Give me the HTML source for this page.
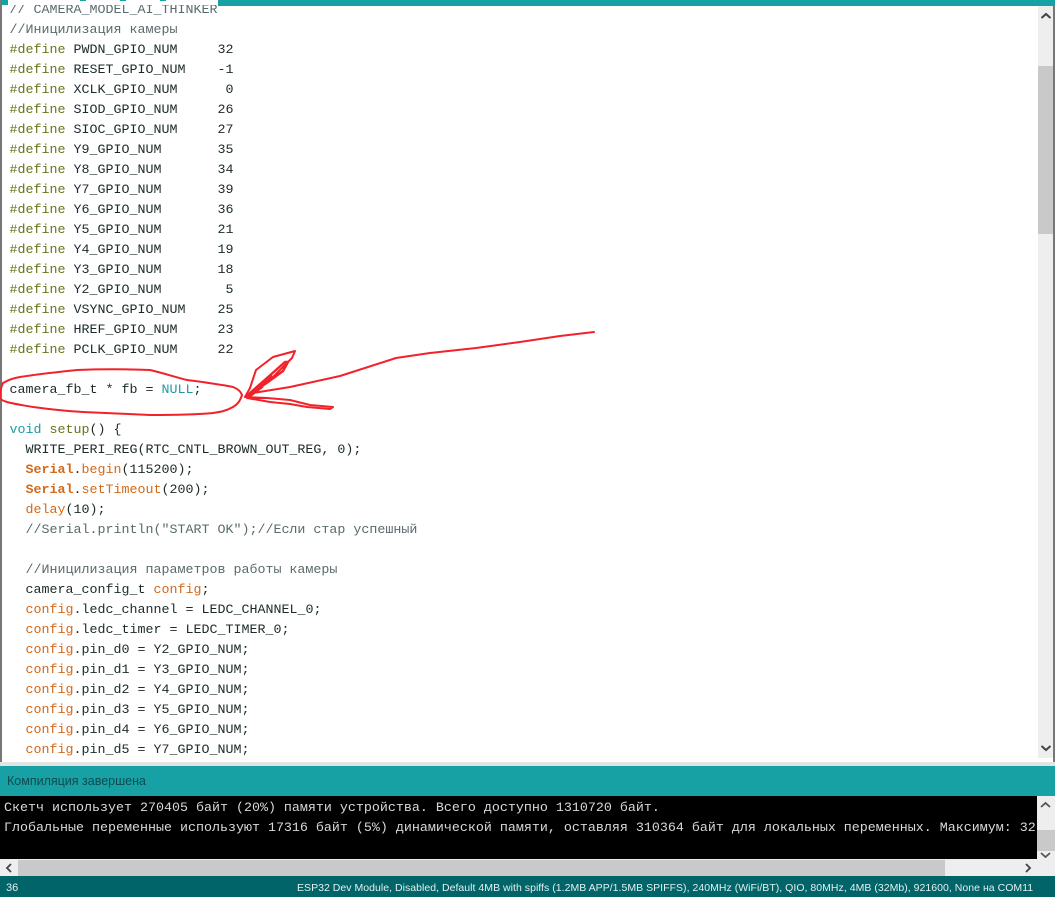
<!DOCTYPE html>
<html><head><meta charset="utf-8"><style>
html,body{margin:0;padding:0}
body{width:1055px;height:897px;position:relative;overflow:hidden;background:#fff;font-family:"Liberation Mono","DejaVu Sans Mono",monospace}
.a{position:absolute}
.c{position:absolute;left:9.5px;top:1px;white-space:pre;font-size:13.33px;line-height:20px;color:#1c2a2a;filter:blur(.25px)}
.l{display:block;height:20px}
.k{color:#d3691a}.t{color:#1f9aa0}.m{color:#5a6a6c}.y{color:#65761c}
.s{font-family:"Liberation Sans",sans-serif}
</style></head><body>
<div class="a" style="left:0;top:6px;width:1055px;height:756px;background:#fff"></div>
<div class="c"><span class="l m">// CAMERA_MODEL_AI_THINKER</span><span class="l m">//Иницилизация камеры</span><span class="l"><span class="y">#define</span> PWDN_GPIO_NUM     32</span><span class="l"><span class="y">#define</span> RESET_GPIO_NUM    -1</span><span class="l"><span class="y">#define</span> XCLK_GPIO_NUM      0</span><span class="l"><span class="y">#define</span> SIOD_GPIO_NUM     26</span><span class="l"><span class="y">#define</span> SIOC_GPIO_NUM     27</span><span class="l"><span class="y">#define</span> Y9_GPIO_NUM       35</span><span class="l"><span class="y">#define</span> Y8_GPIO_NUM       34</span><span class="l"><span class="y">#define</span> Y7_GPIO_NUM       39</span><span class="l"><span class="y">#define</span> Y6_GPIO_NUM       36</span><span class="l"><span class="y">#define</span> Y5_GPIO_NUM       21</span><span class="l"><span class="y">#define</span> Y4_GPIO_NUM       19</span><span class="l"><span class="y">#define</span> Y3_GPIO_NUM       18</span><span class="l"><span class="y">#define</span> Y2_GPIO_NUM        5</span><span class="l"><span class="y">#define</span> VSYNC_GPIO_NUM    25</span><span class="l"><span class="y">#define</span> HREF_GPIO_NUM     23</span><span class="l"><span class="y">#define</span> PCLK_GPIO_NUM     22</span><span class="l"> </span><span class="l">camera_fb_t * fb = <span class="t">NULL</span>;</span><span class="l"> </span><span class="l"><span class="t">void</span> <span class="y">setup</span>() {</span><span class="l">  WRITE_PERI_REG(RTC_CNTL_BROWN_OUT_REG, 0);</span><span class="l">  <span class="k" style="font-weight:bold">Serial</span>.<span class="k">begin</span>(115200);</span><span class="l">  <span class="k" style="font-weight:bold">Serial</span>.<span class="k">setTimeout</span>(200);</span><span class="l">  <span class="k">delay</span>(10);</span><span class="l m">  //Serial.println("START OK");//Если стар успешный</span><span class="l"> </span><span class="l m">  //Иницилизация параметров работы камеры</span><span class="l">  camera_config_t <span class="k">config</span>;</span><span class="l">  <span class="k">config</span>.ledc_channel = LEDC_CHANNEL_0;</span><span class="l">  <span class="k">config</span>.ledc_timer = LEDC_TIMER_0;</span><span class="l">  <span class="k">config</span>.pin_d0 = Y2_GPIO_NUM;</span><span class="l">  <span class="k">config</span>.pin_d1 = Y3_GPIO_NUM;</span><span class="l">  <span class="k">config</span>.pin_d2 = Y4_GPIO_NUM;</span><span class="l">  <span class="k">config</span>.pin_d3 = Y5_GPIO_NUM;</span><span class="l">  <span class="k">config</span>.pin_d4 = Y6_GPIO_NUM;</span><span class="l">  <span class="k">config</span>.pin_d5 = Y7_GPIO_NUM;</span></div>

<div class="a" style="left:0;top:0;width:1055px;height:5px;background:#17a1a5"></div>
<div class="a" style="left:8px;top:0;width:210px;height:5px;background:#fff"></div>
<div class="a" style="left:218px;top:5px;width:837px;height:1px;background:#17a1a5"></div>
<div class="a" style="left:80px;top:0;width:6px;height:1px;background:#17a1a5"></div>
<div class="a" style="left:120px;top:0;width:6px;height:1px;background:#17a1a5"></div>
<div class="a" style="left:160px;top:0;width:6px;height:1px;background:#17a1a5"></div>
<div class="a" style="left:0;top:0;width:1.5px;height:765px;background:#777"></div>
<div class="a" style="left:1053px;top:6px;width:2px;height:756px;background:#777"></div>
<div class="a" style="left:1038px;top:6px;width:15px;height:752px;background:#eeeeee"></div>
<div class="a" style="left:1038px;top:66px;width:15px;height:168px;background:#c9c9c9"></div>
<svg class="a" style="left:1038px;top:6px" width="15" height="756"><path d="M3.5 12 L8 8 L12.5 12" fill="none" stroke="#444" stroke-width="2"/><path d="M3.5 740 L8 744 L12.5 740" fill="none" stroke="#444" stroke-width="2"/></svg>

<svg class="a" style="left:0;top:0;filter:blur(.3px)" width="620" height="430" fill="none" stroke="#f2222a" stroke-width="2" stroke-linejoin="round" stroke-linecap="round">
<path d="M242 395 C240 401 238 404 233 407 C226 411 220 412 213 413 C192 415 170 415 150 415 C128 414 105 413 83 412 C65 411 48 409 33 407 C22 405 14 404 7 402 C1 400 0 399 0 397 C0 392 1 387 3 383 C8 380 14 378 20 377 C38 374 58 372 77 370 C102 369 126 369 150 370 C163 373 175 377 187 380 C203 382 218 384 233 387 C238 389 241 392 242 395"/>
<path d="M253 393 L290 387 L340 376 L396 358 L430 353 L476 348 L520 342 L560 336 L594 332"/>
<path d="M245 397 L250 388 L256 370 L273 357 L295 351 L292 358 L273 377 L257 390 L246 397"/>
<path d="M250 393 L267 378 L285 362 L288 362 L283 371 L268 382 L252 393" stroke-width="2.4"/>
<path d="M248 395 L258 387 L271 376 M250 396 L262 387" stroke-width="2.6"/>
<path d="M245 397 L267 398 L290 400 L310 405 L333 407 L330 409 L307 407 L290 404 L270 402 L247 398"/>
</svg>

<div class="a" style="left:0;top:762px;width:1055px;height:4px;background:#e3e3e3"></div>
<div class="a" style="left:0;top:766px;width:1055px;height:30px;background:#17a1a5"></div>
<div class="a s" style="left:7px;top:774px;font-size:12.5px;line-height:15px;color:#0f4a4e;white-space:pre">Компиляция завершена</div>
<div class="a" style="left:0;top:796px;width:1037px;height:63px;background:#000;overflow:hidden"><div style="position:absolute;left:4px;top:1px;margin-top:2px;white-space:pre;font-size:13.33px;line-height:20px;color:#d8d8d8;filter:blur(.25px)">Скетч использует 270405 байт (20%) памяти устройства. Всего доступно 1310720 байт.
Глобальные переменные используют 17316 байт (5%) динамической памяти, оставляя 310364 байт для локальных переменных. Максимум: 32</div></div>
<div class="a" style="left:1037px;top:796px;width:18px;height:80px;background:#eeeeee"></div>
<div class="a" style="left:1037px;top:830px;width:18px;height:21px;background:#c9c9c9"></div>
<svg class="a" style="left:1037px;top:796px" width="18" height="66"><path d="M4 11 L8.5 7 L13 11" fill="none" stroke="#555" stroke-width="1.8"/><path d="M4 57 L8.5 61 L13 57" fill="none" stroke="#555" stroke-width="1.8"/></svg>
<div class="a" style="left:0;top:859px;width:1037px;height:17px;background:#eeeeee"></div>
<div class="a" style="left:18px;top:860px;width:927px;height:16px;background:#c9c9c9"></div>
<svg class="a" style="left:0;top:859px" width="1037" height="17"><path d="M11 5 L7 9 L11 13" fill="none" stroke="#444" stroke-width="1.8"/><path d="M1026 5 L1030 9 L1026 13" fill="none" stroke="#444" stroke-width="1.8"/></svg>
<div class="a" style="left:0;top:876px;width:1055px;height:21px;background:#006468"></div>
<div class="a s" style="left:6px;top:881px;font-size:11px;line-height:14px;color:#e3f0f0">36</div>
<div class="a s" style="left:297px;top:881px;font-size:10.5px;line-height:14px;color:#e3f0f0;white-space:pre;letter-spacing:.03px">ESP32 Dev Module, Disabled, Default 4MB with spiffs (1.2MB APP/1.5MB SPIFFS), 240MHz (WiFi/BT), QIO, 80MHz, 4MB (32Mb), 921600, None на COM11</div>
</body></html>
